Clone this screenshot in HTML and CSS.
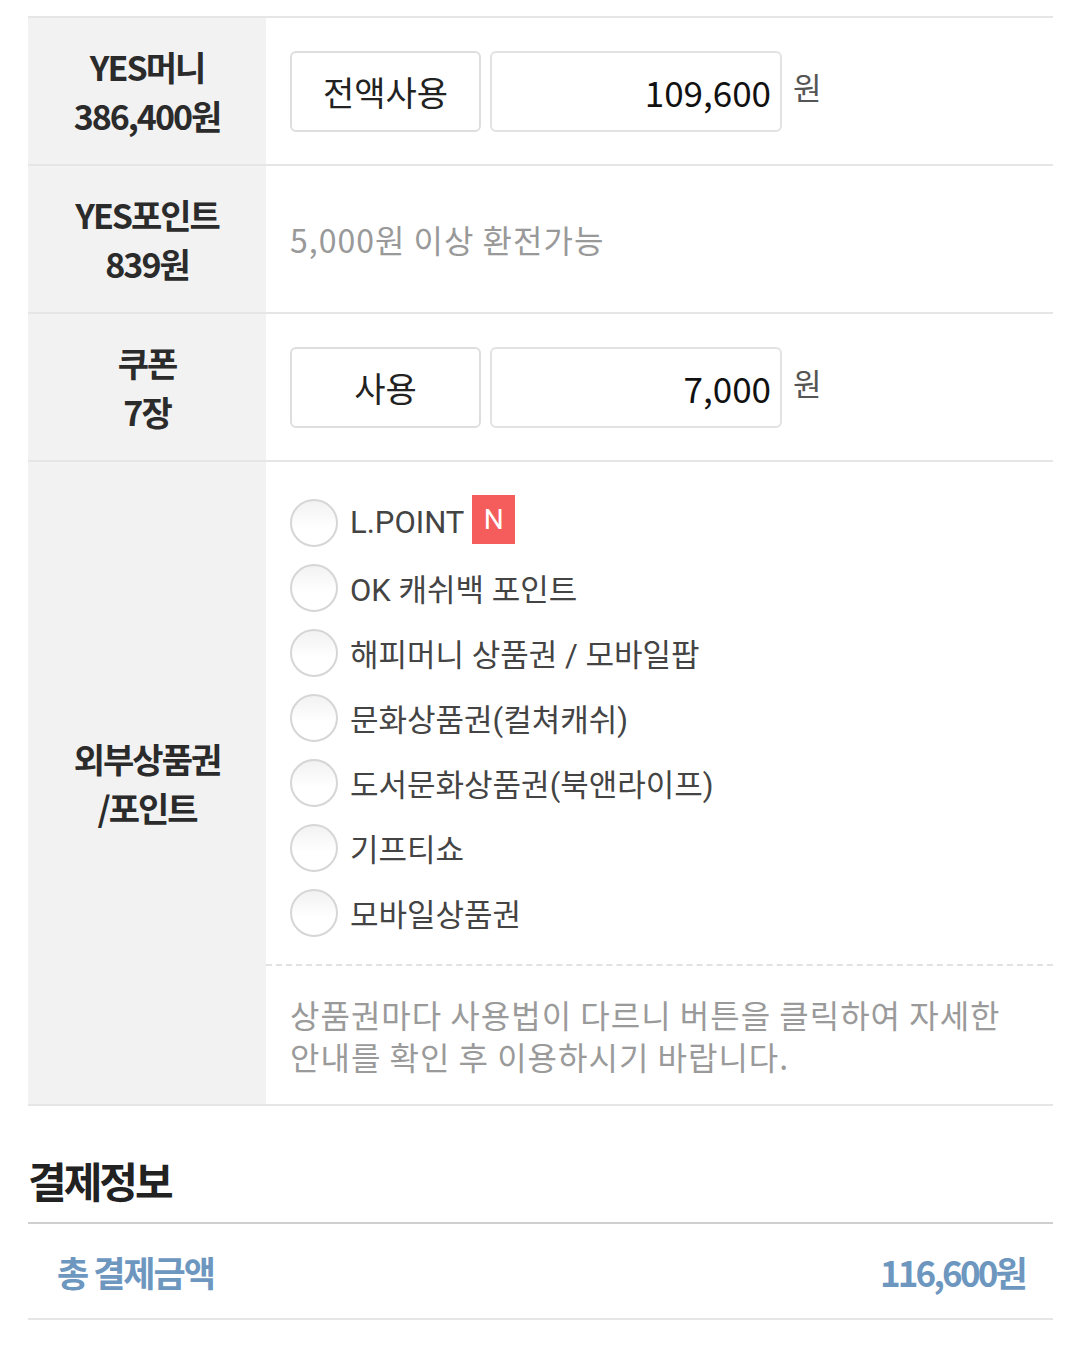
FILE: index.html
```html
<!DOCTYPE html>
<html>
    <head>
        <meta charset="utf-8" />
        <title>결제정보</title>
        <link rel="stylesheet" href="styles.css">
    </head>
    <body>
        <div class="page">
            <div class="pay_table">
                <div class="pay_row">
                    <div class="pay_label">YES머니<br>386,400원</div>
                    <div class="pay_cont">
                        <button type="button" class="use_btn">전액사용</button>
                        <div class="amount_box">109,600</div>
                        <span class="won">원</span>
                    </div>
                </div>
                <div class="pay_row">
                    <div class="pay_label">YES포인트<br>839원</div>
                    <div class="pay_cont">
                        <p class="info_txt">5,000원 이상 환전가능</p>
                    </div>
                </div>
                <div class="pay_row">
                    <div class="pay_label">쿠폰<br>7장</div>
                    <div class="pay_cont">
                        <button type="button" class="use_btn">사용</button>
                        <div class="amount_box">7,000</div>
                        <span class="won">원</span>
                    </div>
                </div>
                <div class="pay_row">
                    <div class="pay_label">외부상품권<br>/포인트</div>
                    <div class="pay_cont pay_cont_col">
                        <ul class="ext_list">
                            <li><span class="radio"></span>L.POINT <span class="new_badge">N</span></li>
                            <li><span class="radio"></span>OK 캐쉬백 포인트</li>
                            <li><span class="radio"></span>해피머니 상품권 / 모바일팝</li>
                            <li><span class="radio"></span>문화상품권(컬쳐캐쉬)</li>
                            <li><span class="radio"></span>도서문화상품권(북앤라이프)</li>
                            <li><span class="radio"></span>기프티쇼</li>
                            <li><span class="radio"></span>모바일상품권</li>
                        </ul>
                        <p class="ext_note">상품권마다 사용법이 다르니 버튼을 클릭하여 자세한<br>안내를 확인 후 이용하시기 바랍니다.</p>
                    </div>
                </div>
            </div>

            <h3 class="section_title">결제정보</h3>
            <div class="total_row">
                <span class="total_label">총 결제금액</span>
                <span class="total_num">116,600원</span>
            </div>
        </div>
    </body>
</html>
```

FILE: styles.css
```css
* {
	padding: 0;
	margin: 0;
	box-sizing: border-box;
}
body {
	font-family: "Noto Sans CJK KR", "Noto Sans", sans-serif;
	background: #fff;
	color: #333;
}
.page {
	padding: 16px 27px 0 28px;
}
.pay_table {
	border-top: 2px solid #e6e6e6;
}
.pay_row {
	display: flex;
	border-bottom: 2px solid #e6e6e6;
}
.pay_row:nth-child(-n+3) {
	height: 148px;
}
.pay_label {
	width: 238px;
	flex-shrink: 0;
	background: #f2f2f2;
	display: flex;
	align-items: center;
	justify-content: center;
	text-align: center;
	font-size: 34px;
	font-weight: bold;
	line-height: 49px;
	letter-spacing: -2px;
	color: #2b2b2b;
}
.pay_cont {
	flex: 1;
	display: flex;
	align-items: center;
	padding-left: 24px;
}
.pay_cont_col {
	flex-direction: column;
	align-items: stretch;
	padding-left: 0;
}
.use_btn {
	width: 191px;
	height: 81px;
	border: 2px solid #dedede;
	border-radius: 6px;
	background: #fff;
	font-family: inherit;
	font-size: 34px;
	color: #222;
}
.amount_box {
	width: 292px;
	height: 81px;
	margin-left: 9px;
	border: 2px solid #e2e2e2;
	border-radius: 6px;
	text-align: right;
	padding-right: 9px;
	font-size: 35px;
	line-height: 77px;
	color: #111;
}
.won {
	margin-left: 11px;
	margin-bottom: 10px;
	font-size: 31px;
	color: #555;
}
.info_txt {
	font-size: 32px;
	letter-spacing: 1px;
	color: #999;
}
.ext_list {
	list-style: none;
	padding: 28px 0 19px 24px;
}
.ext_list li {
	height: 65px;
	display: flex;
	align-items: center;
	font-family: Roboto, "Noto Sans CJK KR", sans-serif;
	font-size: 31px;
	color: #444;
}
.radio {
	width: 48px;
	height: 48px;
	border-radius: 50%;
	border: 2px solid #d6d6d6;
	background: linear-gradient(#f2f2f2, #fff 60%);
	margin-right: 12px;
	flex-shrink: 0;
}
.new_badge {
	display: inline-block;
	width: 43px;
	height: 49px;
	margin-left: 8px;
	margin-bottom: 6px;
	background: #f55d5d;
	color: #fff;
	text-align: center;
	font-size: 28px;
	line-height: 49px;
}
.ext_note {
	border-top: 2px dashed #e2e2e2;
	padding: 27px 24px 27px 24px;
	font-size: 32px;
	line-height: 42px;
	letter-spacing: 1px;
	color: #9a9a9a;
}
.section_title {
	margin-top: 43px;
	padding-bottom: 12px;
	font-size: 42px;
	font-weight: bold;
	letter-spacing: -3px;
	color: #222;
	border-bottom: 2px solid #cfcfcf;
}
.total_row {
	height: 96px;
	display: flex;
	align-items: center;
	justify-content: space-between;
	padding: 0 28px 0 29px;
	border-bottom: 2px solid #e6e6e6;
	font-size: 35px;
	font-weight: bold;
	letter-spacing: -2px;
	color: #6d97bf;
}
.total_num {
	letter-spacing: -2.8px;
}
```
